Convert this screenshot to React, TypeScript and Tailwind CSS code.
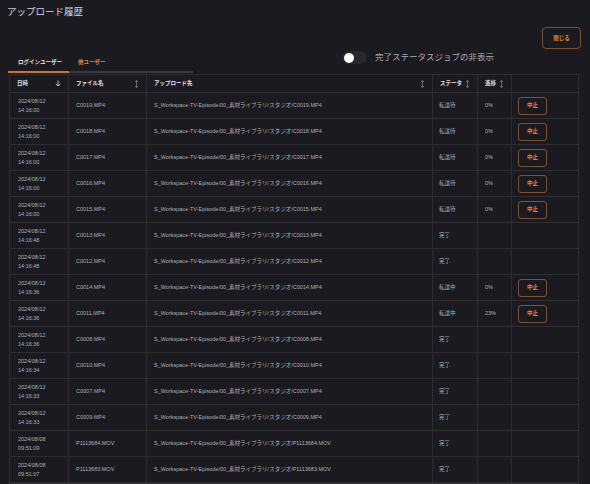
import React from 'react';

type Row = {
  date: string;
  time: string;
  file: string;
  status: string;
  progress?: string;
  cancel?: boolean;
};

const rows: Row[] = [
  { date: '2024/08/12', time: '14:16:00', file: 'C0019.MP4', status: '転送待', progress: '0%', cancel: true },
  { date: '2024/08/12', time: '14:16:00', file: 'C0018.MP4', status: '転送待', progress: '0%', cancel: true },
  { date: '2024/08/12', time: '14:16:00', file: 'C0017.MP4', status: '転送待', progress: '0%', cancel: true },
  { date: '2024/08/12', time: '14:16:00', file: 'C0016.MP4', status: '転送待', progress: '0%', cancel: true },
  { date: '2024/08/12', time: '14:16:00', file: 'C0015.MP4', status: '転送待', progress: '0%', cancel: true },
  { date: '2024/08/12', time: '14:16:48', file: 'C0013.MP4', status: '完了' },
  { date: '2024/08/12', time: '14:16:48', file: 'C0012.MP4', status: '完了' },
  { date: '2024/08/12', time: '14:16:36', file: 'C0014.MP4', status: '転送中', progress: '0%', cancel: true },
  { date: '2024/08/12', time: '14:16:36', file: 'C0011.MP4', status: '転送中', progress: '23%', cancel: true },
  { date: '2024/08/12', time: '14:16:36', file: 'C0008.MP4', status: '完了' },
  { date: '2024/08/12', time: '14:16:34', file: 'C0010.MP4', status: '完了' },
  { date: '2024/08/12', time: '14:16:33', file: 'C0007.MP4', status: '完了' },
  { date: '2024/08/12', time: '14:16:33', file: 'C0009.MP4', status: '完了' },
  { date: '2024/08/08', time: '09:51:09', file: 'P1113684.MOV', status: '完了' },
  { date: '2024/08/08', time: '09:51:07', file: 'P1113683.MOV', status: '完了' },
];

const SortBoth = () => (
  <svg width="5" height="8" viewBox="0 0 5 8" className="shrink-0 text-[#8a8990]">
    <path d="M2.5 0.5 L2.5 7.5 M1 2 L2.5 0.5 L4 2 M1 6 L2.5 7.5 L4 6" stroke="currentColor" strokeWidth="0.7" fill="none" />
  </svg>
);

const SortDown = () => (
  <svg width="6" height="7" viewBox="0 0 6 7" className="shrink-0 text-[#c9c8ce]">
    <path d="M3 0.5 L3 6 M0.8 3.8 L3 6 L5.2 3.8" stroke="currentColor" strokeWidth="0.9" fill="none" />
  </svg>
);

const Th: React.FC<{ w: string; label?: string; icon?: React.ReactNode; last?: boolean }> = ({ w, label, icon, last }) => (
  <div className={`${w} flex items-center justify-between gap-[3px] px-[7px] h-[17px] ${last ? '' : 'border-r'} border-[#2e2d34] overflow-hidden`}>
    <span className="whitespace-nowrap overflow-hidden min-w-0 text-[5.5px] font-bold text-[#e2e1e6]">{label}</span>
    {icon}
  </div>
);

export default function App() {
  return (
    <div
      className="w-[590px] h-[484px] overflow-hidden bg-[#1b1a20] text-[#b9b8bd]"
      style={{ fontFamily: '"Liberation Sans", "Noto Sans CJK JP", sans-serif' }}
    >
      <div className="flex justify-between pl-[7px] pr-[9px] pt-[5px]">
        <h1 className="text-[9.5px] leading-[14px] text-[#d4d3d8]">アップロード履歴</h1>
        <button className="mt-[22px] w-[39px] h-[22px] rounded-[4px] border border-[#7d5433] text-[5.5px] font-bold text-[#d98c3f]">
          閉じる
        </button>
      </div>

      <div className="flex items-start pl-[8px] mt-[2px]">
        <div className="w-[185px] pt-[6px]">
          <div className="flex items-center h-[11px] text-[5.5px]">
            <span className="w-[61px] pl-[10px] text-[#e2e1e6] font-bold">ログインユーザー</span>
            <span className="pl-[9px] text-[#d98c3f] font-bold">他ユーザー</span>
          </div>
          <div className="flex h-[1.5px] mt-[3px]">
            <div className="w-[61px] bg-[#c07a36]" />
            <div className="flex-1 bg-[#3a3940]" />
          </div>
        </div>
        <div className="ml-[149px] flex items-center gap-[8px]">
          <div className="w-[25px] h-[13px] rounded-full bg-[#28272e] flex items-center px-[1.5px]">
            <div className="w-[10px] h-[10px] rounded-full bg-white" />
          </div>
          <span className="text-[8.5px] text-[#a9a8ae]">完了ステータスジョブの非表示</span>
        </div>
      </div>

      <div className="ml-[9px] mt-[1.5px] w-[570px] border border-[#2e2d34]">
        <div className="flex border-b border-[#2e2d34]">
          <Th w="w-[59px]" label="日時" icon={<SortDown />} />
          <Th w="w-[78px]" label="ファイル名" icon={<SortBoth />} />
          <Th w="w-[286px]" label="アップロード先" icon={<SortBoth />} />
          <Th w="w-[45px]" label="ステータス" icon={<SortBoth />} />
          <Th w="w-[34px]" label="進捗率" icon={<SortBoth />} />
          <Th w="flex-1" last />
        </div>
        {rows.map((r, i) => (
          <div key={i} className="flex border-b border-[#2e2d34] text-[5.5px] text-[#b0afb5]">
            <div className="w-[59px] border-r border-[#2e2d34] pl-[8px] py-[4px] leading-[8.5px]">
              <div>{r.date}</div>
              <div>{r.time}</div>
            </div>
            <div className="w-[78px] border-r border-[#2e2d34] px-[7px] flex items-center">{r.file}</div>
            <div className="w-[286px] border-r border-[#2e2d34] px-[7px] flex items-center whitespace-nowrap">
              S_Workspace-TV-Episode/00_素材ライブラリ/スタジオ/{r.file}
            </div>
            <div className="w-[45px] border-r border-[#2e2d34] px-[6px] flex items-center">{r.status}</div>
            <div className="w-[34px] border-r border-[#2e2d34] px-[7px] flex items-center">{r.progress}</div>
            <div className="flex-1 px-[6px] flex items-center">
              {r.cancel && (
                <button className="w-[29px] h-[18px] rounded-[3px] border border-[#7d5433] text-[5.5px] font-bold text-[#d98c3f]">
                  中止
                </button>
              )}
            </div>
          </div>
        ))}
      </div>
    </div>
  );
}
